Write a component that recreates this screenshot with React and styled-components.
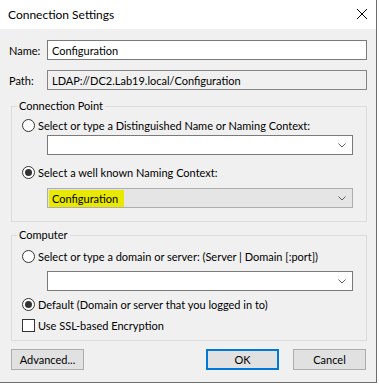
import React from "react"
import styled, { createGlobalStyle } from "styled-components"

const GlobalStyle = createGlobalStyle`
  html, body {
    margin: 0;
    padding: 0;
    background: #ffffff;
  }
  body {
    font-family: Lato, "Noto Sans", sans-serif;
    font-size: 11px;
    color: #000000;
  }
`

const Window = styled.div`
  width: 376px;
  height: 382px;
  background: #f0f0f0;
  border-right: 1px solid #6e6e6e;
  border-bottom: 1px solid #6e6e6e;
  display: flex;
  flex-direction: column;
`

const TitleBar = styled.div`
  height: 29px;
  background: #ffffff;
  display: flex;
  align-items: center;
  justify-content: space-between;
  padding: 0 9px 0 8px;
  font-size: 12px;
`

const CloseButton = styled.svg`
  width: 10px;
  height: 10px;
  margin-top: -1px;
`

const Content = styled.div`
  padding: 0 9px;
  display: flex;
  flex-direction: column;
`

const FieldRow = styled.div`
  display: flex;
  align-items: center;
  margin-top: ${(p) => p.$top}px;
`

const FieldLabel = styled.label`
  width: 38px;
  flex-shrink: 0;
`

const TextBox = styled.input`
  flex: 1;
  min-width: 0;
  height: 20px;
  box-sizing: border-box;
  margin: 0;
  padding: 0 4px;
  border: 1px solid ${(p) => (p.readOnly ? "#858585" : "#7a7a7a")};
  background: ${(p) => (p.readOnly ? "#f0f0f0" : "#ffffff")};
  font: inherit;
  color: #000000;
  outline: none;
`

const GroupBox = styled.fieldset`
  margin: ${(p) => p.$top}px 0 0 2px;
  padding: ${(p) => p.$pad};
  border: 1px solid #dcdcdc;
  display: flex;
  flex-direction: column;
  min-width: 0;
`

const Legend = styled.legend`
  padding: 0 2px;
  margin-left: -5px;
  line-height: 16px;
`

const OptionRow = styled.label`
  display: flex;
  align-items: center;
  height: 16px;
  gap: 3px;
  margin-top: ${(p) => p.$top || 0}px;
  white-space: nowrap;
`

const Radio = styled.span`
  width: 13px;
  height: 13px;
  box-sizing: border-box;
  border: 1px solid #333333;
  border-radius: 50%;
  background: #ffffff;
  flex-shrink: 0;
  display: flex;
  align-items: center;
  justify-content: center;

  &::after {
    content: "";
    width: 7px;
    height: 7px;
    border-radius: 50%;
    background: #333333;
    display: ${(p) => (p.$checked ? "block" : "none")};
  }
`

const CheckBox = styled.span`
  width: 13px;
  height: 13px;
  box-sizing: border-box;
  border: 1px solid #333333;
  background: #ffffff;
  flex-shrink: 0;
`

const Combo = styled.div`
  height: 20px;
  box-sizing: border-box;
  margin: ${(p) => p.$top}px 0 0 25px;
  width: 306px;
  border: 1px solid ${(p) => (p.$disabled ? "#adadad" : "#7a7a7a")};
  background: ${(p) => (p.$disabled ? "#e5e5e5" : "#ffffff")};
  display: flex;
  align-items: center;
  justify-content: space-between;
  padding: 0 5px 0 1px;
`

const Highlight = styled.span`
  background: #e8e800;
  padding: 0 6px 0 3px;
  line-height: 17px;
`

const Chevron = styled.svg`
  width: 8px;
  height: 5px;
  margin-right: 1px;
`

const ButtonRow = styled.div`
  display: flex;
  margin: 8px 0 0 2px;
`

const Button = styled.button`
  width: 73px;
  height: 21px;
  box-sizing: border-box;
  margin: 0 0 0 ${(p) => p.$left || 0}px;
  padding: 0;
  font: inherit;
  color: #000000;
  background: #e1e1e1;
  border: ${(p) => (p.$primary ? "2px solid #0078d7" : "1px solid #adadad")};
`

const ChevronIcon = () => (
  <Chevron viewBox="0 0 8 5">
    <path d="M0.5 0.5 L4 4 L7.5 0.5" fill="none" stroke="#606060" strokeWidth="1" />
  </Chevron>
)

const App = () => {
  return (
    <>
      <GlobalStyle />
      <Window>
        <TitleBar>
          <span>Connection Settings</span>
          <CloseButton viewBox="0 0 10 10">
            <path d="M0 0 L10 10 M10 0 L0 10" stroke="#000" strokeWidth="1" />
          </CloseButton>
        </TitleBar>
        <Content>
          <FieldRow $top={11}>
            <FieldLabel>Name:</FieldLabel>
            <TextBox defaultValue="Configuration" />
          </FieldRow>
          <FieldRow $top={10}>
            <FieldLabel>Path:</FieldLabel>
            <TextBox readOnly value="LDAP://DC2.Lab19.local/Configuration" />
          </FieldRow>

          <GroupBox $top={8} $pad="3px 0 13px 10px">
            <Legend>Connection Point</Legend>
            <OptionRow>
              <Radio />
              Select or type a Distinguished Name or Naming Context:
            </OptionRow>
            <Combo $top={2}>
              <span />
              <ChevronIcon />
            </Combo>
            <OptionRow $top={9}>
              <Radio $checked />
              Select a well known Naming Context:
            </OptionRow>
            <Combo $top={8} $disabled>
              <Highlight>Configuration</Highlight>
              <ChevronIcon />
            </Combo>
          </GroupBox>

          <GroupBox $top={5} $pad="5px 0 7px 10px">
            <Legend>Computer</Legend>
            <OptionRow>
              <Radio />
              Select or type a domain or server: (Server | Domain [:port])
            </OptionRow>
            <Combo $top={7}>
              <span />
              <ChevronIcon />
            </Combo>
            <OptionRow $top={5}>
              <Radio $checked />
              Default (Domain or server that you logged in to)
            </OptionRow>
            <OptionRow $top={5}>
              <CheckBox />
              Use SSL-based Encryption
            </OptionRow>
          </GroupBox>

          <ButtonRow>
            <Button>Advanced...</Button>
            <Button $primary $left={122}>OK</Button>
            <Button $left={14}>Cancel</Button>
          </ButtonRow>
        </Content>
      </Window>
    </>
  )
}

export default App
